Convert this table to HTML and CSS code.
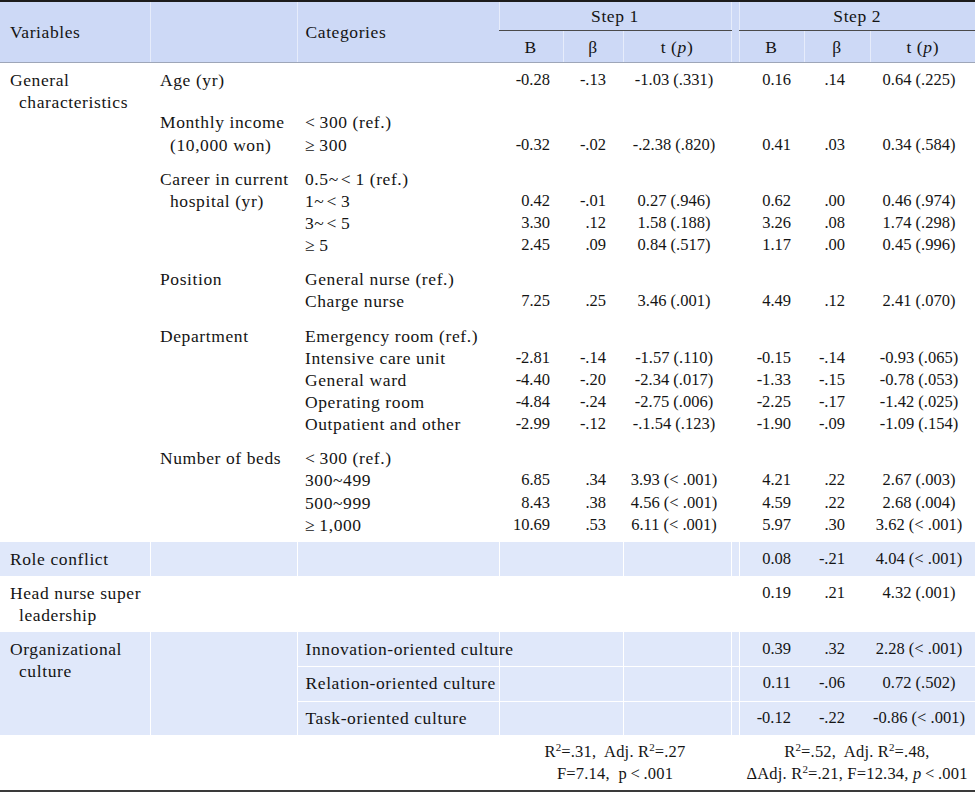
FILE: index.html
```html
<!DOCTYPE html>
<html lang="en">
<head>
<meta charset="utf-8">
<title>Regression table</title>
<link rel="stylesheet" href="styles.css">
</head>
<body>
<table class="tbl">
  <colgroup>
    <col class="w-var"><col class="w-sub"><col class="w-cat">
    <col class="w-b1"><col class="w-be1"><col class="w-t1">
    <col class="w-sp">
    <col class="w-b2"><col class="w-be2"><col class="w-t2">
  </colgroup>
  <thead>
    <tr class="hr1">
      <th rowspan="2" class="c-var">Variables</th>
      <th rowspan="2" class="c-sub"></th>
      <th rowspan="2" class="c-cat">Categories</th>
      <th colspan="3" class="step">Step 1</th>
      <th rowspan="2" class="sp"></th>
      <th colspan="3" class="step">Step 2</th>
    </tr>
    <tr class="hr2">
      <th class="hb">B</th><th class="hb">β</th><th class="hb">t (<i>p</i>)</th>
      <th class="hb">B</th><th class="hb">β</th><th class="hb">t (<i>p</i>)</th>
    </tr>
  </thead>
  <tbody>
    <tr class="first">
      <td rowspan="6" class="c-var hang">General characteristics</td>
      <td class="c-sub">Age (yr)</td>
      <td class="c-cat"></td>
      <td class="b1">-0.28</td><td class="be1">-.13</td><td class="t1">-1.03 (.331)</td>
      <td class="sp"></td>
      <td class="b2">0.16</td><td class="be2">.14</td><td class="t2">0.64 (.225)</td>
    </tr>
    <tr>
      <td class="c-sub hang2">Monthly income<br>(10,000 won)</td>
      <td class="c-cat">&lt;&#8201;300 (ref.)<br>≥&#8201;300</td>
      <td class="b1"><br>-0.32</td><td class="be1"><br>-.02</td><td class="t1"><br>-.2.38 (.820)</td>
      <td class="sp"></td>
      <td class="b2"><br>0.41</td><td class="be2"><br>.03</td><td class="t2"><br>0.34 (.584)</td>
    </tr>
    <tr>
      <td class="c-sub hang2">Career in current<br>hospital (yr)</td>
      <td class="c-cat">0.5~&#8202;&lt;&#8201;1 (ref.)<br>1~&#8202;&lt;&#8201;3<br>3~&#8202;&lt;&#8201;5<br>≥&#8201;5</td>
      <td class="b1"><br>0.42<br>3.30<br>2.45</td>
      <td class="be1"><br>-.01<br>.12<br>.09</td>
      <td class="t1"><br>0.27 (.946)<br>1.58 (.188)<br>0.84 (.517)</td>
      <td class="sp"></td>
      <td class="b2"><br>0.62<br>3.26<br>1.17</td>
      <td class="be2"><br>.00<br>.08<br>.00</td>
      <td class="t2"><br>0.46 (.974)<br>1.74 (.298)<br>0.45 (.996)</td>
    </tr>
    <tr>
      <td class="c-sub">Position</td>
      <td class="c-cat">General nurse (ref.)<br>Charge nurse</td>
      <td class="b1"><br>7.25</td><td class="be1"><br>.25</td><td class="t1"><br>3.46 (.001)</td>
      <td class="sp"></td>
      <td class="b2"><br>4.49</td><td class="be2"><br>.12</td><td class="t2"><br>2.41 (.070)</td>
    </tr>
    <tr>
      <td class="c-sub">Department</td>
      <td class="c-cat">Emergency room (ref.)<br>Intensive care unit<br>General ward<br>Operating room<br>Outpatient and other</td>
      <td class="b1"><br>-2.81<br>-4.40<br>-4.84<br>-2.99</td>
      <td class="be1"><br>-.14<br>-.20<br>-.24<br>-.12</td>
      <td class="t1"><br>-1.57 (.110)<br>-2.34 (.017)<br>-2.75 (.006)<br>-.1.54 (.123)</td>
      <td class="sp"></td>
      <td class="b2"><br>-0.15<br>-1.33<br>-2.25<br>-1.90</td>
      <td class="be2"><br>-.14<br>-.15<br>-.17<br>-.09</td>
      <td class="t2"><br>-0.93 (.065)<br>-0.78 (.053)<br>-1.42 (.025)<br>-1.09 (.154)</td>
    </tr>
    <tr>
      <td class="c-sub">Number of beds</td>
      <td class="c-cat">&lt;&#8201;300 (ref.)<br>300~499<br>500~999<br>≥&#8201;1,000</td>
      <td class="b1"><br>6.85<br>8.43<br>10.69</td>
      <td class="be1"><br>.34<br>.38<br>.53</td>
      <td class="t1"><br>3.93 (&lt; .001)<br>4.56 (&lt; .001)<br>6.11 (&lt; .001)</td>
      <td class="sp"></td>
      <td class="b2"><br>4.21<br>4.59<br>5.97</td>
      <td class="be2"><br>.22<br>.22<br>.30</td>
      <td class="t2"><br>2.67 (.003)<br>2.68 (.004)<br>3.62 (&lt; .001)</td>
    </tr>
    <tr class="shade">
      <td class="c-var">Role conflict</td>
      <td class="c-sub"></td>
      <td class="c-cat"></td>
      <td class="b1"></td><td class="be1"></td><td class="t1"></td>
      <td class="sp"></td>
      <td class="b2">0.08</td><td class="be2">-.21</td><td class="t2">4.04 (&lt; .001)</td>
    </tr>
    <tr>
      <td class="c-var hang">Head nurse super leadership</td>
      <td class="c-sub"></td>
      <td class="c-cat"></td>
      <td class="b1"></td><td class="be1"></td><td class="t1"></td>
      <td class="sp"></td>
      <td class="b2">0.19</td><td class="be2">.21</td><td class="t2">4.32 (.001)</td>
    </tr>
    <tr class="shade">
      <td rowspan="3" class="c-var hang">Organizational culture</td>
      <td rowspan="3" class="c-sub"></td>
      <td class="c-cat">Innovation-oriented culture</td>
      <td class="b1"></td><td class="be1"></td><td class="t1"></td>
      <td class="sp"></td>
      <td class="b2">0.39</td><td class="be2">.32</td><td class="t2">2.28 (&lt; .001)</td>
    </tr>
    <tr class="shade sub-row">
      <td class="c-cat">Relation-oriented culture</td>
      <td class="b1"></td><td class="be1"></td><td class="t1"></td>
      <td class="sp"></td>
      <td class="b2">0.11</td><td class="be2">-.06</td><td class="t2">0.72 (.502)</td>
    </tr>
    <tr class="shade sub-row">
      <td class="c-cat">Task-oriented culture</td>
      <td class="b1"></td><td class="be1"></td><td class="t1"></td>
      <td class="sp"></td>
      <td class="b2">-0.12</td><td class="be2">-.22</td><td class="t2">-0.86 (&lt; .001)</td>
    </tr>
    <tr class="foot">
      <td class="c-var"></td>
      <td class="c-sub"></td>
      <td class="c-cat"></td>
      <td colspan="3" class="fit">R<sup>2</sup>=.31,&nbsp; Adj. R<sup>2</sup>=.27<br>F=7.14,&nbsp; p&#8201;&lt;&#8201;.001</td>
      <td class="sp"></td>
      <td colspan="3" class="fit">R<sup>2</sup>=.52,&nbsp; Adj. R<sup>2</sup>=.48,<br>ΔAdj. R<sup>2</sup>=.21, F=12.34<i>, p</i>&#8201;&lt;&#8201;.001</td>
    </tr>
  </tbody>
</table>
</body>
</html>
```
FILE: styles.css
```css
html, body {
  margin: 0;
  padding: 0;
  background: #ffffff;
}

.tbl {
  width: 975px;
  table-layout: fixed;
  border-collapse: collapse;
  font-family: "Liberation Serif", "Times New Roman", serif;
  font-size: 17.5px;
  letter-spacing: 0.6px;
  line-height: 22.14px;
  color: #141414;
  border-top: 2px solid #1c1c1c;
  border-bottom: 2px solid #3a3a3a;
}

.w-var { width: 150px; }
.w-sub { width: 147px; }
.w-cat { width: 202px; }
.w-b1 { width: 64px; }
.w-be1 { width: 60px; }
.w-t1 { width: 108px; }
.w-sp { width: 8px; }
.w-b2 { width: 65px; }
.w-be2 { width: 66px; }
.w-t2 { width: 105px; }

th, td {
  padding: 6px 0;
  vertical-align: top;
  white-space: nowrap;
}

/* header */
thead th {
  background: #cdd9f6;
  font-weight: normal;
  border-left: 1px solid #e6ecfb;
  vertical-align: middle;
}
thead th:first-child { border-left: none; }
.hr1 th { padding: 3px 0 3px; }
.hr2 th { padding: 5px 0 4px; }
thead tr.hr2 th { border-bottom: 1px solid #9ea6b8; }
thead th[rowspan] { border-bottom: 1px solid #9ea6b8; }
th.c-var { text-align: left; padding-left: 10px; }
th.c-cat { text-align: left; padding-left: 8px; }
th.step {
  text-align: center;
  border-bottom: 1px solid #4a4a4a;
}
th.hb { text-align: center; }

/* body cells */
td.c-var { padding-left: 10px; white-space: normal; }
td.c-sub { padding-left: 10px; }
td.c-cat { padding-left: 8px; }
td.hang { padding-left: 19px; text-indent: -9px; padding-right: 8px; }
td.hang2 { padding-left: 20px; text-indent: -10px; }

td.b1, td.be1, td.t1, td.b2, td.be2, td.t2 {
  font-size: 16.5px;
  letter-spacing: 0;
}
td.b1 { text-align: right; padding-right: 13px; }
td.be1 { text-align: right; padding-right: 17px; }
td.t1 { text-align: center; padding-right: 6px; }
td.b2 { text-align: right; padding-right: 13px; }
td.be2 { text-align: right; padding-right: 25px; }
td.t2 { text-align: center; padding-right: 7px; }

tr.first td { padding-bottom: 14px; }
tr.first td.c-var { padding-bottom: 6px; }

/* shaded rows */
tr.shade td { background: #e0e8fa; }
tr.shade td.c-sub,
tr.shade td.c-cat,
tr.shade td.b1,
tr.shade td.sp,
tr.shade td.b2,
tr.shade td.t1 {
  border-left: 1px solid #ffffff;
}
tr.sub-row td.c-cat,
tr.sub-row td.b1,
tr.sub-row td.be1,
tr.sub-row td.t1,
tr.sub-row td.sp,
tr.sub-row td.b2,
tr.sub-row td.be2,
tr.sub-row td.t2 {
  border-top: 1px solid #ffffff;
  padding-top: 5px;
}

/* footer */
tr.foot td { padding: 6px 0 5px; }
td.fit {
  text-align: center;
  font-size: 16.5px;
  letter-spacing: 0.2px;
}
sup {
  font-size: 11px;
  line-height: 0;
  vertical-align: 6px;
  letter-spacing: 0;
}
```
